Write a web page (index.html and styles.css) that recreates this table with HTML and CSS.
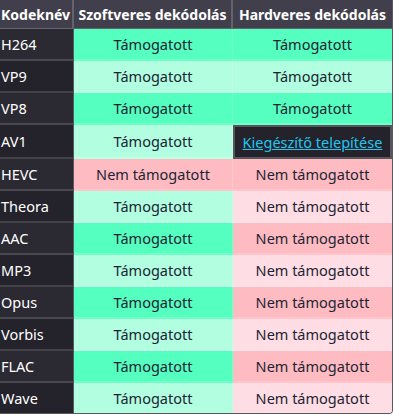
FILE: index.html
```html
<!DOCTYPE html>
<html lang="hu">
<head>
<meta charset="utf-8">
<title>Kodekek</title>
<link rel="stylesheet" href="styles.css">
</head>
<body>
<div class="wrap">
<table class="codecs">
<colgroup><col class="c1"><col class="c2"><col class="c3"></colgroup>
<thead>
<tr><th class="name">Kodeknév</th><th>Szoftveres dekódolás</th><th>Hardveres dekódolás</th></tr>
</thead>
<tbody>
<tr class="odd"><td class="name">H264</td><td class="yes">Támogatott</td><td class="yes">Támogatott</td></tr>
<tr class="even"><td class="name">VP9</td><td class="yes">Támogatott</td><td class="yes">Támogatott</td></tr>
<tr class="odd"><td class="name">VP8</td><td class="yes">Támogatott</td><td class="yes">Támogatott</td></tr>
<tr class="even"><td class="name">AV1</td><td class="yes">Támogatott</td><td class="ext"><a href="#">Kiegészítő telepítése</a></td></tr>
<tr class="odd"><td class="name">HEVC</td><td class="no">Nem támogatott</td><td class="no">Nem támogatott</td></tr>
<tr class="even"><td class="name">Theora</td><td class="yes">Támogatott</td><td class="no">Nem támogatott</td></tr>
<tr class="odd"><td class="name">AAC</td><td class="yes">Támogatott</td><td class="no">Nem támogatott</td></tr>
<tr class="even"><td class="name">MP3</td><td class="yes">Támogatott</td><td class="no">Nem támogatott</td></tr>
<tr class="odd"><td class="name">Opus</td><td class="yes">Támogatott</td><td class="no">Nem támogatott</td></tr>
<tr class="even"><td class="name">Vorbis</td><td class="yes">Támogatott</td><td class="no">Nem támogatott</td></tr>
<tr class="odd"><td class="name">FLAC</td><td class="yes">Támogatott</td><td class="no">Nem támogatott</td></tr>
<tr class="even"><td class="name">Wave</td><td class="yes">Támogatott</td><td class="no">Nem támogatott</td></tr>
</tbody>
</table>
</div>
</body>
</html>
```
FILE: styles.css
```css
html, body {
  margin: 0;
  padding: 0;
  background: #ffffff;
}

.wrap {
  width: 392px;
  border-right: 1px solid #5a5960;
  border-bottom: 1px solid #5a5960;
  border-bottom-right-radius: 4px;
  overflow: hidden;
}

.codecs {
  width: 392px;
  table-layout: fixed;
  border-collapse: separate;
  border-spacing: 0;
  font-family: "Noto Sans", "Open Sans", sans-serif;
  font-size: 14.5px;
  color: #1c2433;
}

.c1 { width: 74px; }
.c2 { width: 159px; }
.c3 { width: 159px; }

.codecs th {
  height: 28px;
  padding: 0;
  background: #423f4d;
  color: #ffffff;
  font-size: 14px;
  font-weight: bold;
  text-align: center;
  white-space: nowrap;
  border-right: 2px solid #64626b;
  border-bottom: 1px solid #64626b;
}

.codecs th:last-child {
  border-right: 0;
}

.codecs th.name {
  text-align: left;
  padding-left: 1px;
}

.codecs td {
  height: 30px;
  padding: 0;
  text-align: center;
  white-space: nowrap;
  border-bottom: 2px solid rgba(255, 255, 255, 0.15);
  border-right: 1px solid rgba(255, 255, 255, 0.18);
}

.codecs td:last-child {
  border-right: 0;
}

.codecs tr:last-child td {
  border-bottom: 0;
}

.codecs td.name {
  text-align: left;
  padding-left: 1px;
  color: #ffffff;
  background: #2b2931;
  border-right-color: #58575d;
}

.codecs tr.even td.name {
  background: #24222a;
}

.odd .yes { background: #55ffbf; }
.even .yes { background: #b1ffe0; }
.odd .no { background: #ffbbc2; }
.even .no { background: #ffdde4; }

.codecs td.ext {
  background: #24222a;
  border: 2px solid #57565c;
}

.ext a {
  color: #20c6f0;
  text-decoration: underline;
}
```
